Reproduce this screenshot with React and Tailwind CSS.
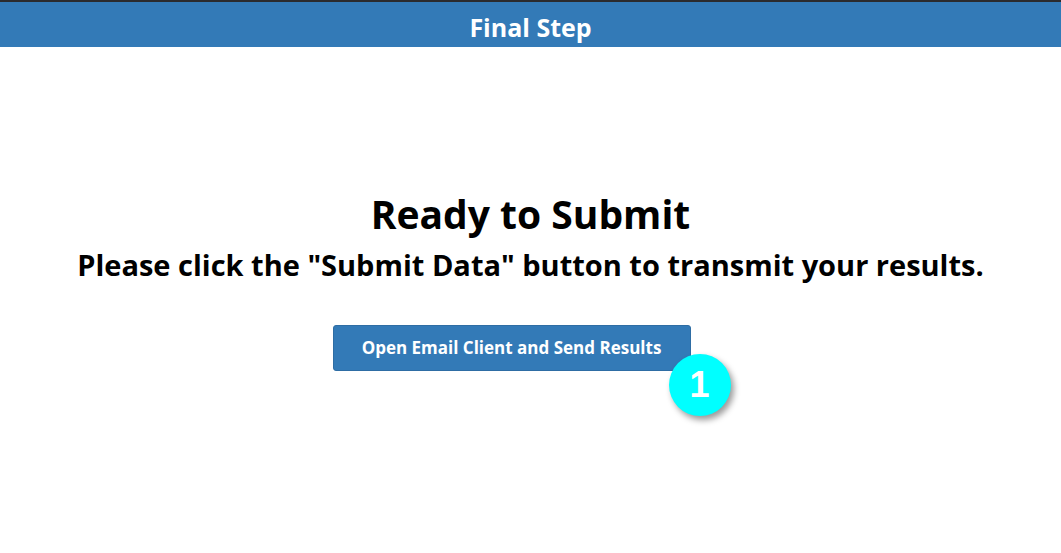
export default function App() {
  return (
    <div className="w-[1061px] h-[553px] bg-white flex flex-col" style={{ fontFamily: '"Open Sans", sans-serif' }}>
      {/* Header */}
      <div className="h-[2px] bg-[#2b2b2e]" />
      <div className="h-[45px] bg-[#337ab7] flex items-center justify-center">
        <h2 className="text-white font-bold text-[25px] leading-none pt-[5px]">Final Step</h2>
      </div>

      {/* Body */}
      <div className="flex flex-col items-center pt-[145px]">
        <h1 className="text-black font-bold text-[39px] leading-[44px]">Ready to Submit</h1>
        <p className="text-black font-bold text-[29px] leading-[34px] mt-[12px]">
          Please click the "Submit Data" button to transmit your results.
        </p>

        <div className="relative mt-[43px] mr-[38px]">
          <button className="w-[358px] h-[46px] bg-[#337ab7] border border-[#2e6da4] rounded-[3px] text-white font-bold text-[17px] flex items-center justify-center">
            Open Email Client and Send Results
          </button>
          <div
            className="absolute left-[336px] top-[29px] w-[62px] h-[62px] rounded-full bg-[#00ffff] flex items-center justify-center text-white font-bold text-[36px] shadow-[3px_4px_6px_rgba(0,0,0,0.4)]"
            style={{ fontFamily: '"Liberation Sans", Arial, sans-serif' }}
          >
            1
          </div>
        </div>
      </div>
    </div>
  );
}
